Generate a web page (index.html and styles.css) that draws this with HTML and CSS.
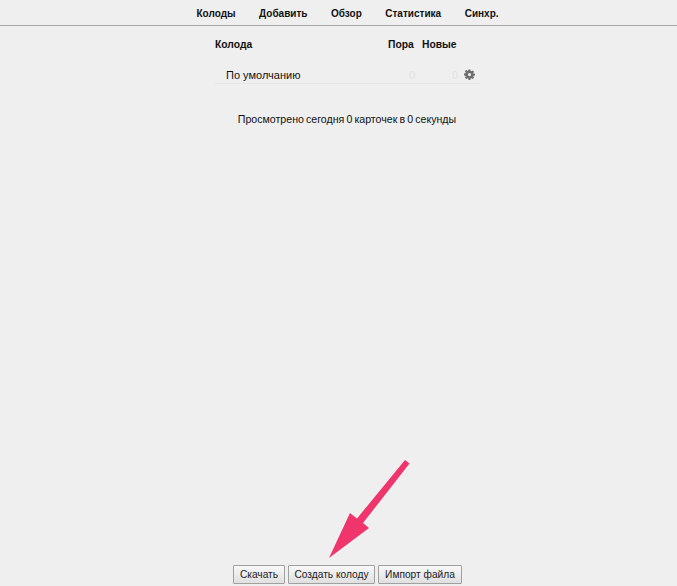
FILE: index.html
```html
<!DOCTYPE html>
<html lang="ru">
<head>
<meta charset="utf-8">
<title>Anki</title>
<link rel="stylesheet" href="styles.css">
</head>
<body>
<div class="app">
  <nav class="topbar">
    <a class="tab">Колоды</a>
    <a class="tab">Добавить</a>
    <a class="tab">Обзор</a>
    <a class="tab">Статистика</a>
    <a class="tab">Синхр.</a>
  </nav>
  <main class="content">
    <div class="decks">
      <div class="deck-head">
        <span class="col-name">Колода</span>
        <span class="col-due">Пора</span>
        <span class="col-new">Новые</span>
      </div>
      <div class="deck-row">
        <span class="deck-name">По умолчанию</span>
        <span class="num num-due">0</span>
        <span class="num num-new">0</span>
        <svg class="gear" viewBox="0 0 24 24" width="11" height="11" aria-hidden="true"><path fill="#6f6f6f" fill-rule="evenodd" d="M10 1h4l.7 3.200 1.700.7 2.800-1.800 2.800 2.800-1.800 2.800.7 1.700L24 10v4l-3.100.7-.7 1.700 1.800 2.800-2.800 2.800-2.800-1.800-1.700.7L14 24h-4l-.7-3.200-1.700-.7-2.800 1.800-2.800-2.800 1.800-2.800-.7-1.700L0 14v-4l3.100-.7.7-1.700-1.800-2.800 2.800-2.800 2.800 1.800 1.700-.7zM12 8.800a3.400 3.400 0 1 0 0 6.800 3.400 3.400 0 0 0 0-6.800z"/></svg>
      </div>
    </div>
    <p class="summary">Просмотрено сегодня 0 карточек в 0 секунды</p>
  </main>
  <footer class="bottombar">
    <button class="btn btn-get">Скачать</button>
    <button class="btn btn-create">Создать колоду</button>
    <button class="btn btn-import">Импорт файла</button>
  </footer>
  <svg class="arrow" viewBox="0 0 677 586" width="677" height="586" aria-hidden="true">
    <polygon fill="#f0356d" points="405,460 409.500,463.500 363,523 369,528 329,558 350,513 357,518.500"/>
  </svg>
</div>
</body>
</html>
```
FILE: styles.css
```css
* { box-sizing: border-box; }
html, body { margin: 0; height: 100%; }
body {
  background: #efefef;
  color: #111;
  font-family: "Liberation Sans", Arial, sans-serif;
  font-size: 11px;
  overflow: hidden;
}
.app {
  position: relative;
  width: 677px;
  height: 586px;
  display: flex;
  flex-direction: column;
}
.topbar {
  height: 26px;
  flex: none;
  display: flex;
  justify-content: center;
  align-items: center;
  gap: 23.500px;
  padding-left: 18px;
  padding-top: 2px;
  border-bottom: 1px solid #a8a8a8;
}
.tab { font-weight: 700; font-size: 10px; color: #111; }
.content { flex: 1; display: flex; flex-direction: column; align-items: center; padding-left: 17px; }
.decks { width: 265px; margin-left: 1px; }
.deck-head {
  display: flex;
  align-items: center;
  height: 36px;
  padding-top: 1px;
  font-weight: 700;
  font-size: 10.300px;
}
.col-name { width: 173px; }
.col-due { width: 34px; }
.deck-row {
  display: flex;
  align-items: center;
  height: 22px;
  padding: 4px 0 0 11px;
  border-bottom: 1px solid #e6e6e6;
}
.deck-name { width: 183px; }
.num { color: #e2e2e2; }
.num-due { width: 43px; }
.num-new { width: 12px; }
.summary { margin: 27px 0 0; text-align: center; height: 16px; line-height: 16px; font-size: 10.600px; word-spacing: -0.800px; }
.bottombar {
  flex: none;
  display: flex;
  justify-content: center;
  gap: 3px;
  padding: 0 0 2px 18px;
}
.btn {
  height: 19px;
  padding: 0 0 1px;
  font: inherit;
  font-size: 10.200px;
  color: #222;
  background: linear-gradient(#f8f8f8, #e0e0e0);
  border: 1px solid #a0a0a0;
  border-radius: 1px;
}
.btn-get { width: 52px; }
.btn-create { width: 87px; }
.btn-import { width: 84px; }
.arrow { position: absolute; left: 0; top: 0; pointer-events: none; }
```
